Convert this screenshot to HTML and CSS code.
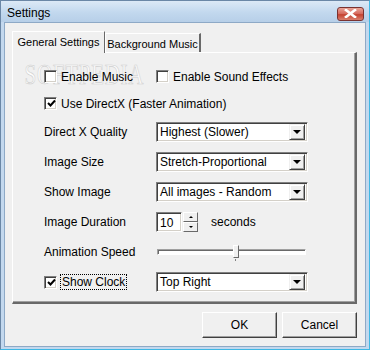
FILE: index.html
```html
<!DOCTYPE html>
<html lang="en">

<head>
    <meta charset="UTF-8">
    <title>Settings</title>
    <link rel="stylesheet" href="styles.css">
</head>

<body>
    <div class="window">
        <div class="titlebar">
            <span class="title">Settings</span>
            <span class="close-btn">
                <svg width="13" height="9" viewBox="0 0 13 9">
                    <path d="M2 1 L11 8 M11 1 L2 8" stroke="#fff" stroke-width="2.6" stroke-linecap="square"/>
                </svg>
            </span>
        </div>

        <div class="client">
            <div class="tabs">
                <div class="tab active">General Settings</div>
                <div class="tab">Background Music</div>
            </div>

            <div class="panel">
                <div class="watermark">SOFTPEDIA</div>

                <div class="row check-row">
                    <label class="check"><span class="box"></span>Enable Music</label>
                    <label class="check"><span class="box"></span>Enable Sound Effects</label>
                </div>
                <div class="row check-row">
                    <label class="check wide"><span class="box checked">
                        <svg width="9" height="9" viewBox="0 0 9 9"><path d="M1 4 L3.5 6.5 L8 1.5" fill="none" stroke="#000" stroke-width="2"/></svg>
                    </span>Use DirectX (Faster Animation)</label>
                </div>

                <div class="row">
                    <span class="label">Direct X Quality</span>
                    <div class="select"><span>Highest (Slower)</span><span class="drop"></span></div>
                </div>
                <div class="row">
                    <span class="label">Image Size</span>
                    <div class="select"><span>Stretch-Proportional</span><span class="drop"></span></div>
                </div>
                <div class="row">
                    <span class="label">Show Image</span>
                    <div class="select"><span>All images - Random</span><span class="drop"></span></div>
                </div>
                <div class="row">
                    <span class="label">Image Duration</span>
                    <div class="duration">
                        <div class="spin-text">10</div>
                        <div class="spin-btns">
                            <span class="spin up"></span>
                            <span class="spin down"></span>
                        </div>
                        <span class="unit">seconds</span>
                    </div>
                </div>
                <div class="row">
                    <span class="label">Animation Speed</span>
                    <div class="slider">
                        <div class="track"></div>
                        <div class="thumb" style="left: 51%"></div>
                    </div>
                </div>
                <div class="row">
                    <label class="check"><span class="box checked">
                        <svg width="9" height="9" viewBox="0 0 9 9"><path d="M1 4 L3.5 6.5 L8 1.5" fill="none" stroke="#000" stroke-width="2"/></svg>
                    </span><span class="focus">Show Clock</span></label>
                    <div class="select"><span>Top Right</span><span class="drop"></span></div>
                </div>
            </div>

            <div class="buttons">
                <button class="btn">OK</button>
                <button class="btn">Cancel</button>
            </div>
        </div>
    </div>
</body>

</html>
```

FILE: styles.css
```css
body {
    margin: 0;
    font-family: "Liberation Sans", Arial, sans-serif;
    font-size: 11px;
    color: #000;
    background: #fff;
}

.window {
    width: 370px;
    height: 350px;
    box-sizing: border-box;
    display: flex;
    flex-direction: column;
    padding: 0 3px 2px 3px;
    background: #c3d8ee;
    border: 1px solid #6b87a6;
    border-right-color: #3fb8e4;
    border-bottom-color: #3fb8e4;
}

.titlebar {
    height: 21px;
    display: flex;
    align-items: center;
    justify-content: space-between;
    margin: 0 -3px;
    padding: 0 5px 0 6px;
    background: linear-gradient(#dce9f6, #c2d8ee 55%, #b7cfe8);
}

.title {
    font-size: 12px;
    margin-top: 2px;
}

.close-btn {
    width: 25px;
    height: 12px;
    margin-top: 4px;
    display: flex;
    align-items: center;
    justify-content: center;
    border: 1px solid #7a3230;
    border-radius: 3px;
    background: linear-gradient(#e9a598, #d4665a 50%, #c4412f 55%, #d9806f);
}

.client {
    flex: 1;
    background: #f0f0f0;
    border: 1px solid #8ea9c6;
    padding: 8px 8px 8px 7px;
    display: flex;
    flex-direction: column;
}

.tabs {
    display: flex;
    align-items: flex-end;
    height: 21px;
}

.tab {
    display: flex;
    align-items: center;
    justify-content: center;
    white-space: nowrap;
    background: #f0f0f0;
    border-top: 1px solid #fff;
    border-left: 1px solid #fff;
    border-right: 2px solid #696969;
    box-sizing: border-box;
    height: 19px;
    width: 96px;
    font-size: 11px;
    padding-top: 1px;
}

.tab.active {
    height: 22px;
    margin-bottom: -1px;
    padding: 0 0 2px 0;
    width: 93px;
    border-right: 1px solid #696969;
    position: relative;
    z-index: 1;
}

.panel {
    position: relative;
    height: 252px;
    box-sizing: border-box;
    border-top: 1px solid #fff;
    border-left: 1px solid #fff;
    border-right: 2px solid #696969;
    border-bottom: 2px solid #696969;
    box-shadow: inset -1px -1px 0 #a0a0a0;
    padding: 10px 0 0 31px;
}

.watermark {
    position: absolute;
    left: -14px;
    top: 4px;
    font-family: "Liberation Serif", serif;
    font-size: 30px;
    letter-spacing: 1px;
    color: #fcfcfc;
    -webkit-text-stroke: 0.7px #cfcfcf;
    transform: scaleX(0.7);
    pointer-events: none;
}

.row {
    position: relative;
    display: grid;
    grid-template-columns: 112px 152px;
    align-items: center;
    height: 30px;
}

.check-row {
    height: 27px;
}

.check {
    position: relative;
    display: flex;
    align-items: center;
    gap: 4px;
}

.check.wide {
    grid-column: 1 / 3;
}

.box {
    width: 11px;
    height: 11px;
    background: #fff;
    border: 1px solid;
    border-color: #808080 #fff #fff #808080;
    box-shadow: inset 1px 1px 0 #404040, inset -1px -1px 0 #d4d0c8;
    display: flex;
    align-items: center;
    justify-content: center;
}

.box svg {
    margin-left: 1px;
}

.focus {
    border: 1px dotted #000;
    padding: 0 1px;
    margin-left: -1px;
}

.select {
    height: 20px;
    box-sizing: border-box;
    display: flex;
    align-items: center;
    justify-content: space-between;
    background: #fff;
    border: 1px solid;
    border-color: #808080 #fff #fff #808080;
    box-shadow: inset 1px 1px 0 #404040, inset -1px -1px 0 #d4d0c8;
    padding: 2px 2px 2px 3px;
    font-size: 12px;
}

.drop {
    width: 16px;
    height: 16px;
    box-sizing: border-box;
    background: #f0f0f0;
    border: 1px solid;
    border-color: #f0f0f0 #404040 #404040 #f0f0f0;
    box-shadow: inset 1px 1px 0 #fff, inset -1px -1px 0 #a0a0a0;
    display: flex;
    align-items: center;
    justify-content: center;
}

.drop::after {
    content: "";
    border-left: 4px solid transparent;
    border-right: 4px solid transparent;
    border-top: 4px solid #000;
}

.duration {
    display: flex;
    align-items: center;
}

.spin-text {
    width: 26px;
    height: 20px;
    box-sizing: border-box;
    background: #fff;
    border: 1px solid;
    border-color: #808080 #fff #fff #808080;
    box-shadow: inset 1px 1px 0 #404040, inset -1px -1px 0 #d4d0c8;
    padding: 3px 0 0 3px;
    font-size: 12px;
}

.spin-btns {
    display: flex;
    flex-direction: column;
    margin-left: 1px;
}

.spin {
    width: 15px;
    height: 10px;
    box-sizing: border-box;
    background: #f0f0f0;
    border: 1px solid;
    border-color: #fff #696969 #696969 #fff;
    display: flex;
    align-items: center;
    justify-content: center;
}

.spin.up::after {
    content: "";
    border-left: 2px solid transparent;
    border-right: 2px solid transparent;
    border-bottom: 2px solid #000;
}

.spin.down::after {
    content: "";
    border-left: 2px solid transparent;
    border-right: 2px solid transparent;
    border-top: 2px solid #000;
}

.unit {
    margin-left: 13px;
    font-size: 12px;
}

.slider {
    position: relative;
    height: 20px;
    margin-left: 1px;
    width: 149px;
}

.track {
    position: absolute;
    left: 0;
    right: 0;
    top: 7px;
    height: 4px;
    border: 1px solid;
    border-color: #a0a0a0 #fff #fff #a0a0a0;
    box-shadow: inset 1px 1px 0 #696969;
    background: #fff;
}

.thumb {
    position: absolute;
    top: 3px;
    width: 4px;
    height: 11px;
    background: #f0f0f0;
    border: 1px solid;
    border-color: #fff #696969 #696969 #fff;
}

.thumb::after {
    content: "";
    position: absolute;
    left: 1px;
    top: 13px;
    width: 1px;
    height: 2px;
    background: #808080;
}

.label,
.check {
    font-size: 12px;
}

.buttons {
    display: flex;
    justify-content: flex-end;
    gap: 5px;
    margin-top: 8px;
}

.btn {
    width: 75px;
    height: 26px;
    font-family: "Liberation Sans", Arial, sans-serif;
    font-size: 12px;
    background: #f0f0f0;
    border: 1px solid;
    border-color: #fff #404040 #404040 #fff;
    box-shadow: inset -1px -1px 0 #a0a0a0;
    padding: 0;
}
```
